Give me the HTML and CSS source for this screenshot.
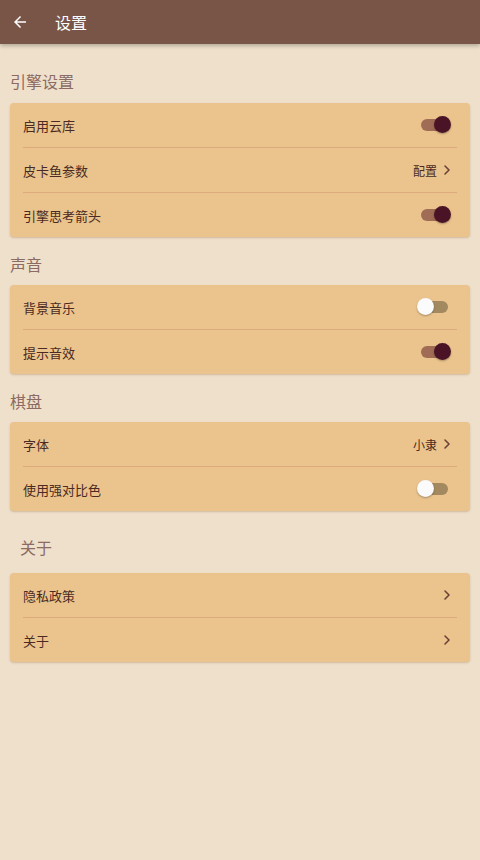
FILE: index.html
```html
<!DOCTYPE html>
<html lang="zh-CN">
<head>
    <meta charset="UTF-8">
    <title>设置</title>
    <link rel="stylesheet" href="styles.css">
</head>
<body>
    <header class="app-bar">
        <button class="back-button" aria-label="返回">
            <svg width="18" height="18" viewBox="0 0 24 24"><path d="M20 11H7.83l5.59-5.59L12 4l-8 8 8 8 1.41-1.41L7.83 13H20v-2z" fill="#ffffff"/></svg>
        </button>
        <h1>设置</h1>
    </header>

    <main class="settings">
        <h2 class="section-title">引擎设置</h2>
        <div class="card">
            <div class="row">
                <span class="label">启用云库</span>
                <span class="switch on"></span>
            </div>
            <div class="row">
                <span class="label">皮卡鱼参数</span>
                <span class="trailing">配置 <svg class="chevron" width="8" height="12" viewBox="0 0 8 12"><path d="M2 2l4 4-4 4" /></svg></span>
            </div>
            <div class="row">
                <span class="label">引擎思考箭头</span>
                <span class="switch on"></span>
            </div>
        </div>

        <h2 class="section-title">声音</h2>
        <div class="card">
            <div class="row">
                <span class="label">背景音乐</span>
                <span class="switch"></span>
            </div>
            <div class="row">
                <span class="label">提示音效</span>
                <span class="switch on"></span>
            </div>
        </div>

        <h2 class="section-title">棋盘</h2>
        <div class="card">
            <div class="row">
                <span class="label">字体</span>
                <span class="trailing">小隶 <svg class="chevron" width="8" height="12" viewBox="0 0 8 12"><path d="M2 2l4 4-4 4" /></svg></span>
            </div>
            <div class="row">
                <span class="label">使用强对比色</span>
                <span class="switch"></span>
            </div>
        </div>

        <h2 class="section-title about-title">关于</h2>
        <div class="card">
            <div class="row">
                <span class="label">隐私政策</span>
                <span class="trailing"><svg class="chevron" width="8" height="12" viewBox="0 0 8 12"><path d="M2 2l4 4-4 4" /></svg></span>
            </div>
            <div class="row">
                <span class="label">关于</span>
                <span class="trailing"><svg class="chevron" width="8" height="12" viewBox="0 0 8 12"><path d="M2 2l4 4-4 4" /></svg></span>
            </div>
        </div>
    </main>
</body>
</html>
```

FILE: styles.css
```css
body {
    margin: 0;
    font-family: 'Noto Sans CJK SC', 'Noto Sans', sans-serif;
    background-color: #efe0cb;
    min-height: 860px;
}
.app-bar {
    height: 44px;
    background-color: #795548;
    display: flex;
    align-items: center;
    padding-left: 10px;
    box-shadow: 0 2px 4px rgba(0, 0, 0, 0.25);
}
.back-button {
    background: none;
    border: none;
    padding: 0;
    width: 20px;
    height: 20px;
    display: flex;
    align-items: center;
    justify-content: center;
}
.app-bar h1 {
    margin: 0 0 0 25px;
    font-size: 16px;
    font-weight: 400;
    color: #ffffff;
}
.settings {
    padding: 10px 10px 0 10px;
}
.section-title {
    margin: 15px 0 9px 0;
    font-size: 16px;
    line-height: 24px;
    font-weight: 400;
    color: #8b6b63;
}
.settings .section-title:first-child {
    margin-bottom: 10px;
}
.about-title {
    margin: 24px 0 14px 10px;
}
.card {
    background-color: #ebc48d;
    border-radius: 4px;
    box-shadow: 0 1px 2px rgba(110, 70, 30, 0.25);
    padding: 0 13px;
}
.row {
    height: 44px;
    display: flex;
    align-items: center;
    justify-content: space-between;
}
.row + .row {
    border-top: 1px solid #dcaa7c;
}
.label {
    font-size: 13px;
    color: #4a2a22;
}
.trailing {
    display: flex;
    align-items: center;
    gap: 6px;
    font-size: 12px;
    color: #4a2a22;
    margin-right: 6px;
}
.chevron path {
    fill: none;
    stroke: #6a4236;
    stroke-width: 1.6;
    stroke-linecap: round;
    stroke-linejoin: round;
}
.switch {
    position: relative;
    width: 27px;
    height: 12px;
    border-radius: 6px;
    background-color: #a3895f;
    margin-right: 9px;
}
.switch::after {
    content: '';
    position: absolute;
    top: -3px;
    left: -4px;
    width: 17px;
    height: 17px;
    border-radius: 50%;
    background-color: #fbfbfb;
    box-shadow: 0 1px 2px rgba(0, 0, 0, 0.3);
}
.switch.on {
    background-color: #a16c56;
}
.switch.on::after {
    left: auto;
    right: -3px;
    background-color: #4a1426;
}
```
